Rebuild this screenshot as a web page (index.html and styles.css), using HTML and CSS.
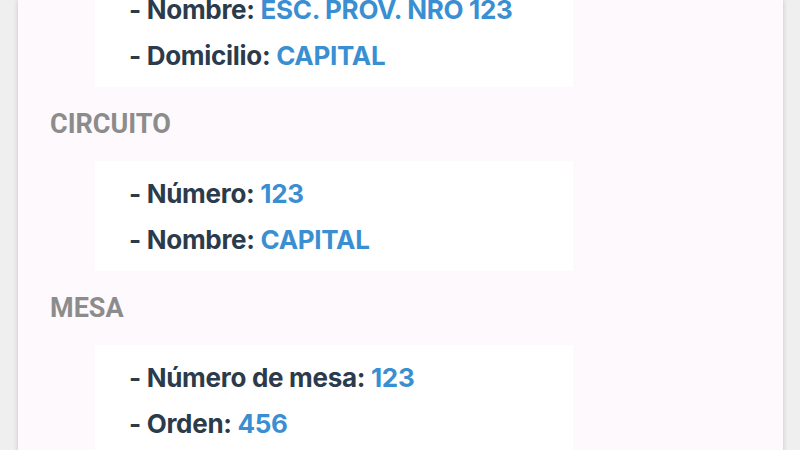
FILE: index.html
```html
<!DOCTYPE html>
<html lang="es">
<head>
<meta charset="utf-8">
<title>Datos de votación</title>
<link rel="stylesheet" href="styles.css">
</head>
<body>
  <main class="card">
    <section class="box box-first">
      <p class="row"><span class="label">- Nombre:</span> <span class="value">ESC. PROV. NRO 123</span></p>
      <p class="row"><span class="label">- Domicilio:</span> <span class="value">CAPITAL</span></p>
    </section>

    <h2 class="heading">CIRCUITO</h2>
    <section class="box">
      <p class="row"><span class="label">- Número:</span> <span class="value">123</span></p>
      <p class="row"><span class="label">- Nombre:</span> <span class="value">CAPITAL</span></p>
    </section>

    <h2 class="heading">MESA</h2>
    <section class="box">
      <p class="row"><span class="label">- Número de mesa:</span> <span class="value">123</span></p>
      <p class="row"><span class="label">- Orden:</span> <span class="value">456</span></p>
    </section>
  </main>
</body>
</html>
```
FILE: styles.css
```css
html, body {
  margin: 0;
  padding: 0;
  height: 100%;
  overflow: hidden;
}

body {
  background: #efefef;
}

.card {
  margin-left: 18px;
  width: 765px;
  min-height: 100%;
  padding-left: 32px;
  box-sizing: border-box;
  background: #fdf9fd;
  box-shadow: 0 0 5px rgba(0, 0, 0, 0.18);
  display: flex;
  flex-direction: column;
  align-items: flex-start;
}

.box {
  margin-left: 45px;
  width: 478px;
  box-sizing: border-box;
  padding: 10px 0 8px 34px;
  background: #ffffff;
}

.box-first {
  margin-top: -23px;
}

.row {
  margin: 0;
  font-family: Inter, "Liberation Sans", sans-serif;
  font-weight: 700;
  font-size: 26px;
  line-height: 46px;
  letter-spacing: -0.3px;
  white-space: nowrap;
}

.label {
  color: #2c3b4b;
}

.value {
  color: #3a8fd2;
}

.heading {
  margin: 22px 0 22px;
  font-family: Roboto, "Liberation Sans", sans-serif;
  font-weight: 700;
  font-size: 27px;
  line-height: 30px;
  color: #8c8c8c;
}
```
